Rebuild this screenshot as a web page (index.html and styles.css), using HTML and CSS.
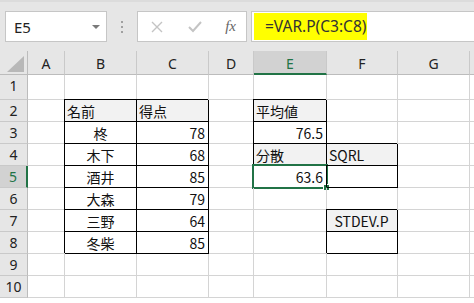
FILE: index.html
```html
<!DOCTYPE html>
<html lang="ja">
<head>
    <meta charset="UTF-8">
    <title>Sheet</title>
    <link rel="stylesheet" href="styles.css">
</head>
<body>
    <div class="toolbar">
        <div class="namebox">
            <span>E5</span>
            <span class="arrow"></span>
        </div>
        <div class="grip"><i></i><i></i><i></i></div>
        <div class="btnbox">
            <svg width="14" height="14" viewBox="0 0 14 14"><path d="M2 2L12 12M12 2L2 12" stroke="#c4c4c4" stroke-width="1.4"/></svg>
            <svg width="16" height="14" viewBox="0 0 16 14"><path d="M2 7L6 11L14 2" stroke="#c4c4c4" stroke-width="2" fill="none"/></svg>
            <span class="fx">fx</span>
        </div>
        <div class="formula">
            <span class="hl">=VAR.P(C3:C8)</span>
        </div>
    </div>

    <div class="sheet">
        <!-- header -->
        <div class="corner"></div>
        <div class="ch">A</div><div class="ch">B</div><div class="ch">C</div><div class="ch">D</div>
        <div class="ch on">E</div><div class="ch">F</div><div class="ch">G</div><div class="ch"></div>

        <!-- 1 -->
        <div class="rh">1</div>
        <div></div><div></div><div></div><div></div><div></div><div></div><div></div><div></div>

        <!-- 2 -->
        <div class="rh">2</div>
        <div></div><div class="b hd">名前</div><div class="b hd">得点</div><div></div>
        <div class="b hd">平均値</div><div></div><div></div><div></div>

        <!-- 3 -->
        <div class="rh">3</div>
        <div></div><div class="b c">柊</div><div class="b r">78</div><div></div>
        <div class="b r">76.5</div><div></div><div></div><div></div>

        <!-- 4 -->
        <div class="rh">4</div>
        <div></div><div class="b c">木下</div><div class="b r">68</div><div></div>
        <div class="b hd">分散</div><div class="b hd">SQRL</div><div></div><div></div>

        <!-- 5 -->
        <div class="rh on">5</div>
        <div></div><div class="b c">酒井</div><div class="b r">85</div><div></div>
        <div class="b r sel">63.6<span class="handle"></span></div><div class="b"></div><div></div><div></div>

        <!-- 6 -->
        <div class="rh">6</div>
        <div></div><div class="b c">大森</div><div class="b r">79</div><div></div>
        <div></div><div></div><div></div><div></div>

        <!-- 7 -->
        <div class="rh">7</div>
        <div></div><div class="b c">三野</div><div class="b r">64</div><div></div>
        <div></div><div class="b hd c">STDEV.P</div><div></div><div></div>

        <!-- 8 -->
        <div class="rh">8</div>
        <div></div><div class="b c">冬柴</div><div class="b r">85</div><div></div>
        <div></div><div class="b"></div><div></div><div></div>

        <!-- 9 -->
        <div class="rh">9</div>
        <div></div><div></div><div></div><div></div><div></div><div></div><div></div><div></div>

        <!-- 10 -->
        <div class="rh">10</div>
        <div></div><div></div><div></div><div></div><div></div><div></div><div></div><div></div>
    </div>
</body>
</html>
```

FILE: styles.css
```css
body {
    margin: 0;
    background: #ffffff;
    font-family: "Noto Sans CJK JP", "Noto Sans", sans-serif;
    overflow: hidden;
}

.toolbar {
    display: flex;
    align-items: center;
    height: 51px;
    box-sizing: border-box;
    padding: 0 0 0 5px;
    background: #e6e6e6;
    border-top: 2px solid #dcdcdc;
}

.namebox,
.btnbox,
.formula {
    height: 31px;
    box-sizing: border-box;
    background: #ffffff;
    border: 1px solid #c6c6c6;
    display: flex;
    align-items: center;
}

.namebox {
    width: 102px;
    padding: 0 6px 0 8px;
    justify-content: space-between;
    font-family: "Noto Sans", sans-serif;
    font-size: 15px;
    color: #222;
}

.arrow {
    width: 0;
    height: 0;
    border-left: 4px solid transparent;
    border-right: 4px solid transparent;
    border-top: 4px solid #7a7a7a;
}

.grip {
    width: 30px;
    display: flex;
    flex-direction: column;
    align-items: center;
    gap: 3px;
}

.grip i {
    width: 2px;
    height: 2px;
    background: #a0a0a0;
}

.btnbox {
    width: 110px;
    padding: 0 10px 0 12px;
    justify-content: space-between;
}

.fx {
    font-family: "Liberation Serif", serif;
    font-style: italic;
    font-size: 15px;
    color: #666;
}

.formula {
    flex: 1;
    margin-left: 4px;
    padding-left: 2px;
    border-right: none;
}

.hl {
    background: #ffff00;
    height: 27px;
    line-height: 27px;
    padding: 0 1px 0 11px;
    font-family: "Noto Sans", sans-serif;
    font-size: 15.5px;
    color: #333;
}

.sheet {
    display: grid;
    grid-template-columns: 28px 37px 72px 72px 45px 73px 71px 72px 1fr;
    grid-template-rows: 24px 25px repeat(9, 22px);
    font-size: 14px;
    color: #111;
}

.sheet > div {
    box-sizing: border-box;
    border-right: 1px solid #d4d4d4;
    border-bottom: 1px solid #d4d4d4;
    line-height: 22px;
    padding: 0 3px;
    white-space: nowrap;
    position: relative;
}

.sheet > .corner {
    background: #e6e6e6;
    border-right-color: #bcbcbc;
    border-bottom-color: #bcbcbc;
}

.corner::after {
    content: "";
    position: absolute;
    right: 3px;
    bottom: 2px;
    border-left: 17px solid transparent;
    border-bottom: 16px solid #b8b8b8;
}

.sheet > .ch {
    background: #e6e6e6;
    border-right-color: #c9c9c9;
    border-bottom-color: #bcbcbc;
    text-align: center;
    font-family: "Noto Sans", sans-serif;
    font-size: 14px;
    line-height: 25px;
    color: #222;
}

.sheet > .ch.on {
    background: #d2d2d2;
    color: #217346;
    border-bottom: 2px solid #217346;
}

.sheet > .rh {
    background: #e6e6e6;
    border-right-color: #bcbcbc;
    border-bottom-color: #c9c9c9;
    text-align: center;
    font-family: "Noto Sans", sans-serif;
    font-size: 14px;
    line-height: 21px;
    color: #222;
    padding: 0;
}

.sheet > .rh.on {
    background: #d2d2d2;
    color: #217346;
    border-right: 2px solid #217346;
}

.sheet > .b {
    border-right-color: #000;
    border-bottom-color: #000;
    box-shadow: -1px -1px 0 #000;
}

.sheet > .hd {
    background: #f2f2f2;
    padding-left: 2px;
}

.sheet > .c {
    text-align: center;
}

.sheet > .r {
    text-align: right;
}

.handle {
    position: absolute;
    right: -4px;
    bottom: -4px;
    width: 5px;
    height: 5px;
    background: #217346;
    border: 1px solid #fff;
}

.sel::before {
    content: "";
    position: absolute;
    left: -2px;
    top: -2px;
    right: -2px;
    bottom: -2px;
    border: 2px solid #217346;
}
```
